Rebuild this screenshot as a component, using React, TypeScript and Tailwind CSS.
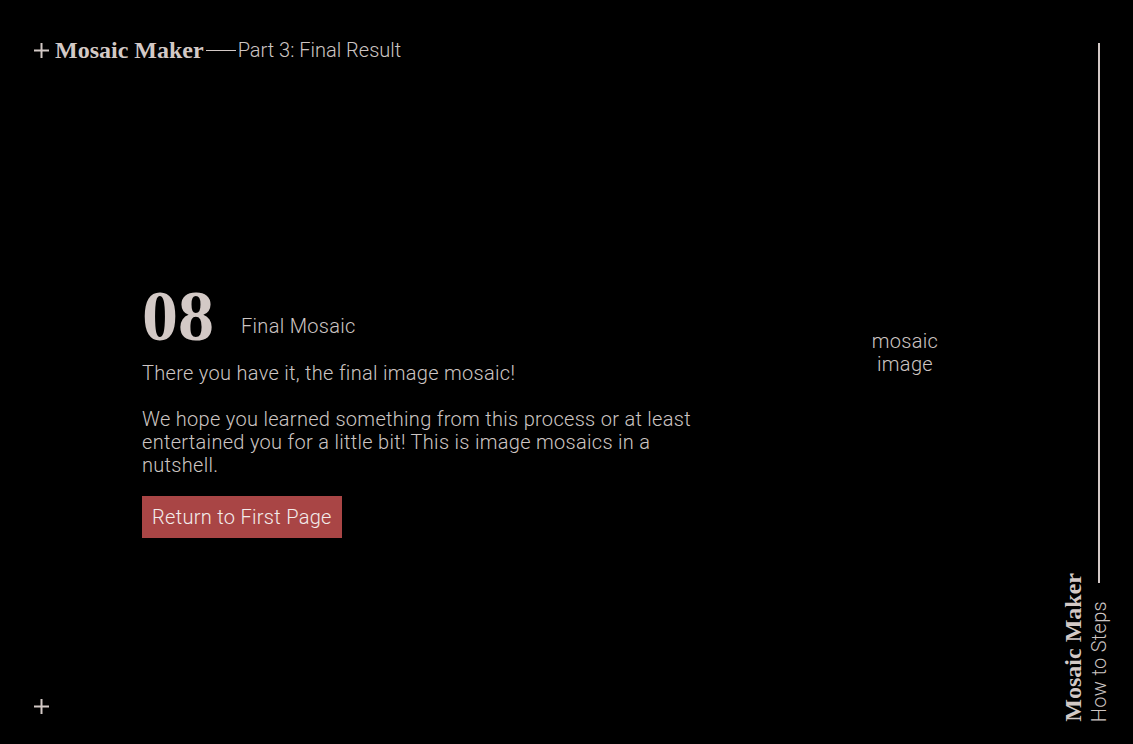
import React from "react";

const serif = "font-['Liberation_Serif',serif] font-bold";
const sans = "font-['Roboto','Liberation_Sans',sans-serif] font-light tracking-[0.3px]";

function Plus() {
  return (
    <svg width="17" height="17" viewBox="0 0 17 17" className="block">
      <path d="M8.5 1v15M1 8.5h15" stroke="#d3c9c6" strokeWidth="2" />
    </svg>
  );
}

export default function App() {
  return (
    <div className="relative h-[744px] w-[1133px] overflow-hidden bg-black text-[#cdc5c3]">
      {/* header */}
      <header className="flex items-center pl-[33px] pt-[38px]">
        <Plus />
        <span className={`${serif} ml-[5px] text-[24px] leading-none text-[#d3c9c6]`}>Mosaic Maker</span>
        <span className="mx-[2px] h-px w-[30px] bg-[#d3c9c6]" />
        <span className={`${sans} text-[20px] leading-none tracking-[0px]`}>Part 3: Final Result</span>
      </header>

      {/* main */}
      <main className="flex pl-[142px] pt-[224px]">
        <section className="w-[565px]">
          <div className="flex items-end">
            <span className={`${serif} text-[72px] leading-[60px] text-[#d3c9c6]`}>08</span>
            <span className={`${sans} ml-[27px] pb-[10px] text-[20px] leading-none`}>Final Mosaic</span>
          </div>
          <div className={`${sans} mt-[16px] text-[20px] leading-[23px]`}>
            <p>There you have it, the final image mosaic!</p>
            <p className="mt-[23px]">
              We hope you learned something from this process or at least entertained you for a little bit! This is image mosaics in a nutshell.
            </p>
          </div>
          <button className={`${sans} mt-[19px] h-[42px] bg-[#a94545] px-[10px] text-[20px] text-[#f3eceb]`}>
            Return to First Page
          </button>
        </section>
        <div className={`${sans} ml-[163px] mt-[44px] w-[70px] text-center text-[20px] leading-[23px]`}>
          mosaic image
        </div>
      </main>

      {/* bottom-left plus */}
      <div className="absolute bottom-[29px] left-[33px]">
        <Plus />
      </div>

      {/* right rail */}
      <aside className="absolute bottom-[22px] right-[24px] top-[43px] flex">
        <div className="flex flex-col justify-end">
          <span className={`${serif} rotate-180 text-[24px] leading-[24px] text-[#d3c9c6] [writing-mode:vertical-rl]`}>Mosaic Maker</span>
        </div>
        <div className="ml-[4px] flex flex-col items-center">
          <div className="w-[2px] flex-1 bg-[#d3c9c6]" />
          <span className={`${sans} mt-[18px] rotate-180 text-[20px] leading-[20px] [writing-mode:vertical-rl]`}>How to Steps</span>
        </div>
      </aside>
    </div>
  );
}
